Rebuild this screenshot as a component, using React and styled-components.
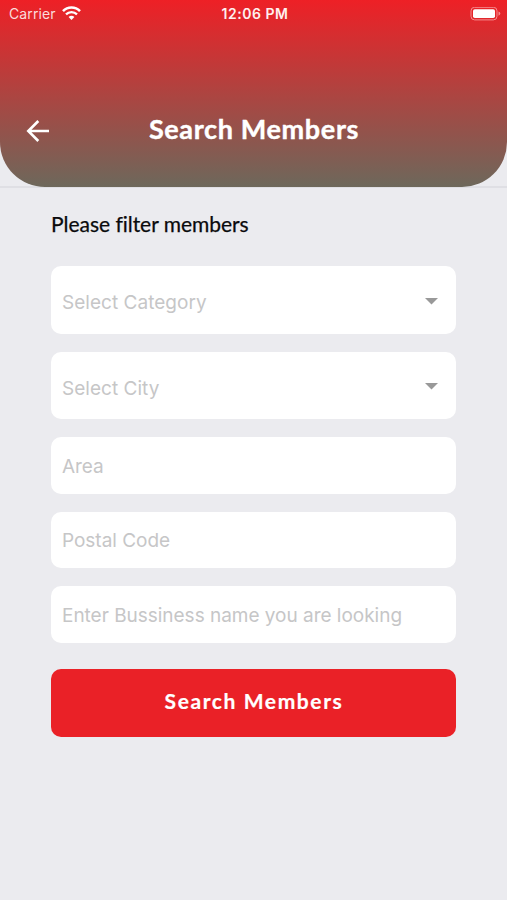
import React from 'react'
import styled, { createGlobalStyle } from 'styled-components'

const colors = {
  red: '#ea2127',
  olive: '#6d685b',
  page: '#ebebef',
  hint: '#c6c6c7',
  caret: '#999999'
}

const fonts = {
  heading: "Lato, 'Open Sans', sans-serif",
  body: "Inter, 'Liberation Sans', sans-serif"
}

const GlobalStyle = createGlobalStyle`
  * {
    box-sizing: border-box;
  }

  body {
    margin: 0;
    background: ${colors.page};
  }
`

const Screen = styled.div`
  width: 100%;
  min-height: 900px;
  background: ${colors.page};
  font-family: ${fonts.body};
`

const HeaderWrap = styled.div`
  height: 188px;
  border-bottom: 2px solid #dfdfe4;
`

const Header = styled.header`
  height: 186.5px;
  border-radius: 0 0 45px 45px;
  background: linear-gradient(#ee2026, ${colors.olive});
  color: #fff;
`

const StatusBar = styled.div`
  display: grid;
  grid-template-columns: 1fr auto 1fr;
  align-items: center;
  height: 27px;
  padding: 0 6px 0 9px;
  font-size: 14px;
  line-height: 27px;
`

const Carrier = styled.div`
  display: flex;
  align-items: center;
  gap: 6px;
  color: #fbdcdc;
  letter-spacing: 0.1px;
`

const Time = styled.div`
  color: #fff0ef;
  font-weight: 600;
  letter-spacing: 0.5px;
`

const Battery = styled.svg`
  justify-self: end;
`

const TitleBar = styled.div`
  display: grid;
  grid-template-columns: 60px 1fr 60px;
  align-items: center;
  height: 40px;
  margin-top: 83px;
`

const BackButton = styled.button`
  display: flex;
  margin: 0;
  padding: 2px 0 0 25px;
  border: 0;
  background: none;
  color: inherit;
`

const Title = styled.h1`
  margin: 0;
  padding: 0 0 2px 1px;
  font-family: ${fonts.heading};
  font-size: 27px;
  font-weight: 700;
  line-height: 38px;
  letter-spacing: 0.65px;
  text-align: center;
  white-space: nowrap;
  -webkit-text-stroke: 0.4px #fff;
`

const Form = styled.main`
  display: flex;
  flex-direction: column;
  gap: 18px;
  padding: 21px 51px 0;
`

const Label = styled.h2`
  margin: 0 0 9px;
  font-family: ${fonts.heading};
  font-size: 21px;
  font-weight: 400;
  line-height: 30px;
  letter-spacing: -0.03px;
  color: #0a0a0c;
  -webkit-text-stroke: 0.25px #0a0a0c;
`

const Field = styled.div`
  display: flex;
  align-items: center;
  justify-content: space-between;
  height: ${props => (props.$select ? '67.5px' : '56.5px')};
  padding: ${props => (props.$select ? '6px 18px 0 11px' : '2px 11px 0')};
  border-radius: 10px;
  background: #fff;
  color: ${colors.hint};
  font-size: 19px;
`

const Hint = styled.span`
  letter-spacing: ${props => props.$spacing || 0}px;
  white-space: nowrap;
`

const Caret = styled.svg`
  margin-top: -4px;
`

const Submit = styled.button`
  height: 68px;
  margin: 8px 0 0;
  padding: 0 0 5px 1px;
  border: 0;
  border-radius: 10px;
  background: ${colors.red};
  color: #fff;
  font-family: ${fonts.heading};
  font-size: 21px;
  font-weight: 700;
  letter-spacing: 1.6px;
  -webkit-text-stroke: 0.2px #fff;
`

const WifiIcon = () => (
  <svg width="19" height="15" viewBox="0 0 19 15" fill="none">
    <path d="M1 5.1a12 12 0 0 1 17 0" stroke="#fff" strokeWidth="2.6" />
    <path d="M4 8.4a7.8 7.8 0 0 1 11 0" stroke="#fff" strokeWidth="2.3" />
    <path d="M6.6 10.9a4 4 0 0 1 5.8 0L9.5 14z" fill="#fff" />
  </svg>
)

const BatteryIcon = () => (
  <Battery width="31" height="14" viewBox="0 0 31 14">
    <rect x="1" y="0.3" width="26" height="12.6" rx="3.6" fill="none" stroke="#f58d90" />
    <rect x="3" y="2.2" width="22" height="8.8" rx="1.8" fill="#fff" />
    <path d="M28.5 4.5v4.2q1.8-.6 1.8-2.1t-1.8-2.1z" fill="#f58d90" />
  </Battery>
)

const BackIcon = () => (
  <svg width="25" height="24" viewBox="0 0 25 24" fill="none" stroke="#fff" strokeWidth="2.6">
    <path d="M24 12H3.5M13.3 2L3.3 12l10 10" />
  </svg>
)

const CaretIcon = () => (
  <Caret width="14" height="8" viewBox="0 0 14 8">
    <path d="M1 1h13L7.5 7.5z" fill={colors.caret} />
  </Caret>
)

const fields = [
  { hint: 'Select Category', select: true, spacing: 0.03 },
  { hint: 'Select City', select: true, spacing: 0.03 },
  { hint: 'Area', spacing: -0.1 },
  { hint: 'Postal Code', spacing: -0.03 },
  { hint: 'Enter Bussiness name you are looking', spacing: -0.02 }
]

const App = () => (
  <Screen>
    <GlobalStyle />
    <HeaderWrap>
      <Header>
        <StatusBar>
          <Carrier>
            Carrier
            <WifiIcon />
          </Carrier>
          <Time>12:06 PM</Time>
          <BatteryIcon />
        </StatusBar>
        <TitleBar>
          <BackButton aria-label="Back">
            <BackIcon />
          </BackButton>
          <Title>Search Members</Title>
        </TitleBar>
      </Header>
    </HeaderWrap>
    <Form>
      <Label>Please filter members</Label>
      {fields.map(field => (
        <Field key={field.hint} $select={field.select}>
          <Hint $spacing={field.spacing}>{field.hint}</Hint>
          {field.select && <CaretIcon />}
        </Field>
      ))}
      <Submit>Search Members</Submit>
    </Form>
  </Screen>
)

export default App
